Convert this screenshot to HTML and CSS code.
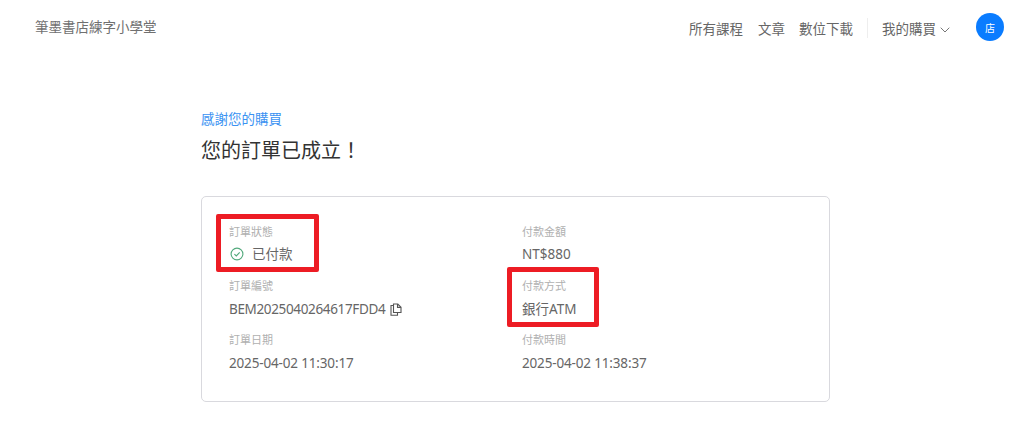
FILE: index.html
```html
<!DOCTYPE html>
<html lang="zh-Hant">
<head>
<meta charset="utf-8">
<title>訂單已成立</title>
<link rel="stylesheet" href="styles.css">
</head>
<body>
<header class="site-header">
  <a class="logo">筆墨書店練字小學堂</a>
  <nav class="nav">
    <a class="nav-link nav-first">所有課程</a>
    <a class="nav-link">文章</a>
    <a class="nav-link">數位下載</a>
    <span class="nav-divider"></span>
    <a class="nav-link nav-menu">我的購買
      <svg class="chevron" viewBox="0 0 10 6" width="10" height="6"><path d="M.7.7 5 5l4.3-4.3" fill="none" stroke="currentColor" stroke-width="1"/></svg>
    </a>
    <span class="avatar">店</span>
  </nav>
</header>
<main class="main">
  <p class="eyebrow">感謝您的購買</p>
  <h1 class="title">您的訂單已成立！</h1>
  <section class="card">
    <div class="cell marked marked-a">
      <div class="label">訂單狀態</div>
      <div class="value status">
        <svg class="check" viewBox="0 0 14 14" width="14" height="14"><circle cx="7" cy="7" r="5.9" fill="none" stroke="#52a97c" stroke-width="1.1"/><path d="M4.4 7.1 6.3 9l3.4-3.6" fill="none" stroke="#52a97c" stroke-width="1.1"/></svg>
        已付款
      </div>
    </div>
    <div class="cell">
      <div class="label">付款金額</div>
      <div class="value">NT$880</div>
    </div>
    <div class="cell">
      <div class="label">訂單編號</div>
      <div class="value code">BEM2025040264617FDD4
        <svg class="copy" viewBox="0 0 12 13" width="12" height="13"><path d="M3.5 2.5V1h4.3L11 4.2v5.3H9M3.5 2.5H1v9.7h6.5V9.5H9M3.5 2.5v7H9M7.5 1.2v3.2h3.3" fill="none" stroke="#555" stroke-width="1.1"/></svg>
      </div>
    </div>
    <div class="cell marked marked-b">
      <div class="label">付款方式</div>
      <div class="value">銀行ATM</div>
    </div>
    <div class="cell">
      <div class="label">訂單日期</div>
      <div class="value stamp">2025-04-02 11:30:17</div>
    </div>
    <div class="cell">
      <div class="label">付款時間</div>
      <div class="value stamp">2025-04-02 11:38:37</div>
    </div>
  </section>
</main>
</body>
</html>
```
FILE: styles.css
```css
*, *::after { box-sizing: border-box; }
html, body { margin: 0; padding: 0; }
body {
  background: #fff;
  color: #666;
  font-family: "Noto Sans", "Noto Sans CJK TC", sans-serif;
  height: 424px;
  overflow: hidden;
}
.site-header {
  display: flex;
  justify-content: space-between;
  align-items: center;
  height: 54px;
  padding: 0 20px 0 35px;
}
.logo { font-size: 13.5px; color: #707070; margin-bottom: 3px; }
.nav { display: flex; align-items: center; font-size: 13.5px; color: #666; }
.nav-link { margin-right: 14px; line-height: 20px; padding-top: 4px; }
.nav-first { margin-right: 15px; }
.nav-divider { width: 1px; height: 20px; background: #eee; margin: 2px 14px 0 0; }
.nav-menu { display: flex; align-items: center; gap: 4px; margin-right: 26px; }
.chevron { color: #777; margin-top: 1px; }
.avatar {
  width: 28px; height: 28px; border-radius: 50%;
  background: #0a7cff; color: #fff; font-size: 10px;
  display: flex; align-items: center; justify-content: center;
}
.main { width: 629px; margin: 0 0 0 201px; padding-top: 55px; }
.eyebrow { margin: 0; font-size: 13.5px; line-height: 20px; color: #3a92f2; }
.title { margin: 7px 0 0; font-size: 20px; line-height: 30px; font-weight: 400; color: #333; }
.card {
  margin-top: 30px;
  height: 206px;
  border: 1px solid #d9d9de;
  border-radius: 5px;
  padding: 26px 27px 0;
  display: grid;
  grid-template-columns: 293px 1fr;
  grid-auto-rows: 54px;
}
.cell { position: relative; }
.cell:nth-child(-n+2) .value { margin-top: 1px; }
.label { font-size: 11px; line-height: 18px; color: #b0b0b0; }
.value { margin-top: 2px; font-size: 13.5px; line-height: 24px; color: #666; }
.status { display: flex; align-items: center; gap: 8px; padding-left: 1px; }
.code { display: flex; align-items: center; gap: 5px; letter-spacing: -0.35px; }
.stamp { letter-spacing: -0.16px; }
.check, .copy { flex: none; }
.marked::after {
  content: "";
  position: absolute;
  border: 5px solid #ed1c24;
  border-radius: 2px;
}
.marked-a::after { left: -13px; top: -9px; width: 103px; height: 58px; }
.marked-b::after { left: -15px; top: -10px; width: 92px; height: 60px; }
```
